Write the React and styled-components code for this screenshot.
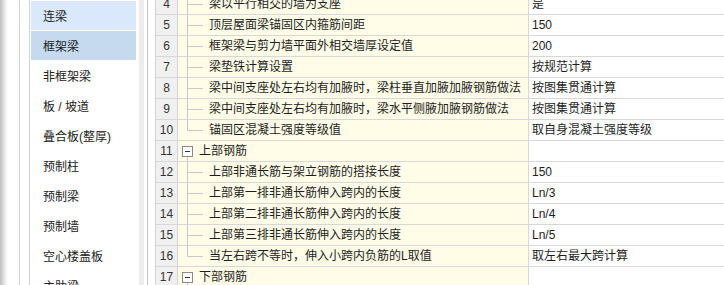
import React from "react";
import styled, { createGlobalStyle } from "styled-components";

const GlobalStyle = createGlobalStyle`
  body {
    margin: 0;
    background: #fff;
  }
`;

const Page = styled.div`
  display: flex;
  width: 724px;
  height: 285px;
  overflow: hidden;
  background: #fff;
  font-family: "Liberation Sans", "Noto Sans CJK SC", sans-serif;
  font-size: 12px;
  color: #1e1e1e;
`;

const Shadow = styled.div`
  flex: none;
  width: 8px;
  background: linear-gradient(to right, #bcbcbc, #e6e6e6 55%, #fff);
`;

const Sidebar = styled.div`
  flex: none;
  display: flex;
  margin-left: 11px;
  padding-left: 9px;
  border-left: 1px solid #d2d2d2;
`;

const List = styled.div`
  width: 105px;
  padding: 1px 3px 0 1px;
  border-left: 1px solid #d2d2d2;
`;

const Item = styled.div`
  height: 29px;
  margin-bottom: 1px;
  padding-left: 12px;
  display: flex;
  align-items: center;
  white-space: nowrap;
  color: #222;
  background: ${(p) => (p.$active ? "#c5d9ef" : p.$hover ? "#d9e8fa" : "transparent")};
`;

const Track = styled.div`
  width: 5px;
  background: #ececec;
`;

const Splitter = styled.div`
  flex: none;
  margin-left: 3px;
  padding-left: 7px;
  border-left: 1px solid #c4c4c4;
`;

const Table = styled.div`
  flex: 1;
  display: flex;
  flex-direction: column;
  margin-top: -6px;
  border-left: 1px solid #d0d0d0;
`;

const Row = styled.div`
  flex: none;
  display: flex;
  height: 21px;
  box-sizing: border-box;
  border-bottom: 1px solid #d8d8d8;
  line-height: 20px;
`;

const NumCell = styled.div`
  flex: none;
  width: 21px;
  background: #f0f0f0;
  border-right: 1px solid #d2d2d2;
  text-align: center;
  color: #333;
`;

const NameCell = styled.div`
  flex: none;
  width: 350px;
  display: flex;
  align-items: center;
  background: #fffde8;
  border-right: 1px solid #d8d8d8;
  white-space: nowrap;
  overflow: hidden;
`;

const ValueCell = styled.div`
  flex: 1;
  padding-left: 3px;
  white-space: nowrap;
`;

const Guide = styled.svg`
  flex: none;
  display: block;
`;

const TreeLine = ({ last }) => (
  <Guide width="31" height="20" viewBox="0 0 31 20">
    <line x1="9.5" y1="0" x2="9.5" y2={last ? 10.5 : 20} stroke="#c8c8c8" />
    <line x1="9.5" y1="10.5" x2="25" y2="10.5" stroke="#c8c8c8" />
  </Guide>
);

const Toggle = () => (
  <Guide width="21" height="20" viewBox="0 0 21 20">
    <line x1="9.5" y1="16" x2="9.5" y2="20" stroke="#c8c8c8" />
    <rect x="4.5" y="5.5" width="10" height="10" fill="#fff" stroke="#8a8a8a" />
    <line x1="7" y1="10.5" x2="12" y2="10.5" stroke="#333" />
  </Guide>
);

const sideItems = [
  "连梁",
  "框架梁",
  "非框架梁",
  "板 / 坡道",
  "叠合板(整厚)",
  "预制柱",
  "预制梁",
  "预制墙",
  "空心楼盖板",
  "主肋梁",
];

const rows = [
  { n: 4, name: "梁以平行相交的墙为支座", value: "是" },
  { n: 5, name: "顶层屋面梁锚固区内箍筋间距", value: "150" },
  { n: 6, name: "框架梁与剪力墙平面外相交墙厚设定值", value: "200" },
  { n: 7, name: "梁垫铁计算设置", value: "按规范计算" },
  { n: 8, name: "梁中间支座处左右均有加腋时，梁柱垂直加腋加腋钢筋做法", value: "按图集贯通计算" },
  { n: 9, name: "梁中间支座处左右均有加腋时，梁水平侧腋加腋钢筋做法", value: "按图集贯通计算" },
  { n: 10, name: "锚固区混凝土强度等级值", value: "取自身混凝土强度等级", last: true },
  { n: 11, name: "上部钢筋", group: true },
  { n: 12, name: "上部非通长筋与架立钢筋的搭接长度", value: "150" },
  { n: 13, name: "上部第一排非通长筋伸入跨内的长度", value: "Ln/3" },
  { n: 14, name: "上部第二排非通长筋伸入跨内的长度", value: "Ln/4" },
  { n: 15, name: "上部第三排非通长筋伸入跨内的长度", value: "Ln/5" },
  { n: 16, name: "当左右跨不等时，伸入小跨内负筋的L取值", value: "取左右最大跨计算", last: true },
  { n: 17, name: "下部钢筋", group: true },
];

export default function App() {
  return (
    <>
      <GlobalStyle />
      <Page>
        <Shadow />
        <Sidebar>
          <List>
            {sideItems.map((label, i) => (
              <Item key={label} $hover={i === 0} $active={i === 1}>
                {label}
              </Item>
            ))}
          </List>
          <Track />
        </Sidebar>
        <Splitter />
        <Table>
          {rows.map((r) => (
            <Row key={r.n}>
              <NumCell>{r.n}</NumCell>
              <NameCell>
                {r.group ? <Toggle /> : <TreeLine last={r.last} />}
                {r.name}
              </NameCell>
              <ValueCell>{r.value}</ValueCell>
            </Row>
          ))}
        </Table>
      </Page>
    </>
  );
}
